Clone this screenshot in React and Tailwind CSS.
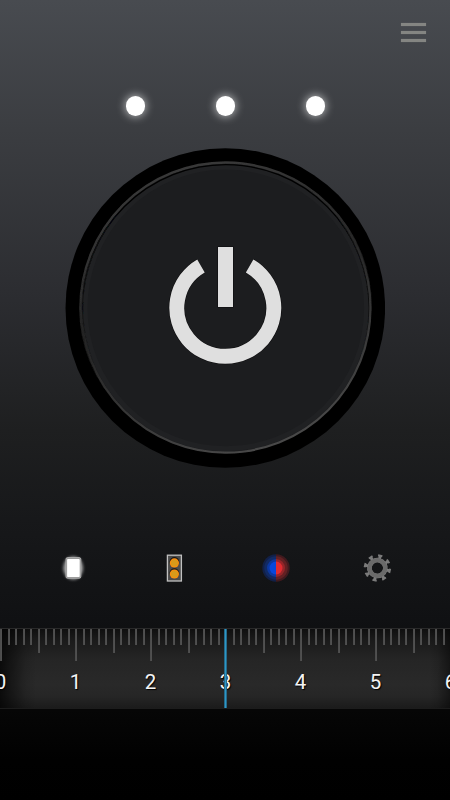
const GEAR_TEETH = [0, 45, 90, 135, 180, 225, 270, 315];
const TICKS = Array.from({ length: 61 }, (_, i) => i);
const LABELS = [0, 1, 2, 3, 4, 5, 6];

function MenuButton() {
  return (
    <button aria-label="Menu" className="flex h-[19px] w-[25px] flex-col justify-between">
      {[0, 1, 2].map((line) => (
        <span key={line} className="block h-[3px] w-full bg-[#848582] shadow-[0_0_1px_#77787a]" />
      ))}
    </button>
  );
}

function Lights() {
  return (
    <div className="flex h-5 w-[199px] items-center justify-between">
      {[0, 1, 2].map((light) => (
        <span
          key={light}
          className="h-5 w-[19px] rounded-full bg-white shadow-[0_0_9px_1px_rgba(255,255,255,0.6)]"
        />
      ))}
    </div>
  );
}

function PowerDial() {
  return (
    <button aria-label="Power" className="block h-80 w-80">
      <svg viewBox="0 0 320 320" className="h-full w-full">
        <defs>
          <linearGradient id="rimTop" x1="0" y1="0" x2="0.3" y2="1">
            <stop offset="0" stopColor="#3c3c3c" />
            <stop offset="0.45" stopColor="#2c2c2c" />
            <stop offset="0.8" stopColor="#191919" stopOpacity="0" />
          </linearGradient>
          <linearGradient id="rimShade" x1="0" y1="0" x2="0" y2="1">
            <stop offset="0" stopColor="#000" />
            <stop offset="0.5" stopColor="#101112" />
            <stop offset="0.7" stopColor="#1c1d1f" stopOpacity="0" />
          </linearGradient>
          <linearGradient id="rimBottom" x1="0.2" y1="0" x2="0.6" y2="1">
            <stop offset="0.25" stopColor="#222" stopOpacity="0" />
            <stop offset="0.6" stopColor="#2e2e2e" />
            <stop offset="1" stopColor="#484848" />
          </linearGradient>
          <filter id="soft" x="-5%" y="-5%" width="110%" height="110%">
            <feGaussianBlur stdDeviation="0.75" />
          </filter>
        </defs>
        <circle cx="160.3" cy="160" r="159.8" fill="#000" />
        <circle cx="160.8" cy="159.9" r="144.6" fill="#1c1d1f" />
        <circle cx="160.8" cy="159.9" r="140.8" fill="none" stroke="#202123" strokeWidth="5" />
        <circle cx="160.8" cy="159.9" r="145.4" fill="none" stroke="url(#rimTop)" strokeWidth="2.4" filter="url(#soft)" />
        <circle cx="160.8" cy="159.9" r="143.3" fill="none" stroke="url(#rimShade)" strokeWidth="1.3" filter="url(#soft)" />
        <circle cx="160.8" cy="159.9" r="144.7" fill="none" stroke="url(#rimBottom)" strokeWidth="2.2" filter="url(#soft)" />
        <g fill="none" stroke="#0b0b0c" strokeWidth="16">
          <path d="M136 117.9A48.5 48.5 0 1 0 184.6 117.9" />
          <path d="M160.5 98.6V159.5" />
        </g>
        <g fill="none" stroke="#dfdfdf" strokeWidth="15">
          <path d="M136 117.9A48.5 48.5 0 1 0 184.6 117.9" />
          <path d="M160.5 99V159" />
        </g>
      </svg>
    </button>
  );
}

function ScreenIcon() {
  return (
    <svg viewBox="0 0 30 30" className="h-[30px] w-[30px]">
      <defs>
        <filter id="glow" x="-50%" y="-50%" width="200%" height="200%">
          <feGaussianBlur stdDeviation="1.8" />
        </filter>
        <filter id="edge" x="-20%" y="-20%" width="140%" height="140%">
          <feGaussianBlur stdDeviation="0.5" />
        </filter>
      </defs>
      <ellipse cx="15.2" cy="15" rx="10" ry="11.6" fill="#fff" opacity="0.6" filter="url(#glow)" />
      <rect x="8" y="4.6" width="14.8" height="20.6" rx="1.5" fill="#969696" stroke="#b0b0b0" strokeWidth="0.9" />
      <rect x="9.2" y="6" width="12.4" height="18" rx="1" fill="#fff" filter="url(#edge)" />
      <rect x="9.5" y="6.2" width="11.8" height="17.7" rx="0.5" fill="#fff" />
    </svg>
  );
}

function WarningLightsIcon() {
  return (
    <svg viewBox="0 0 30 30" className="h-[30px] w-[30px]">
      <rect x="8.4" y="2.2" width="14" height="25.8" fill="#4b4b4b" stroke="#c0c0c0" strokeWidth="1.3" />
      <circle cx="15.4" cy="9" r="4.9" fill="#171717" />
      <circle cx="15.4" cy="20.1" r="4.9" fill="#171717" />
      <circle cx="15.4" cy="9.9" r="4.6" fill="#ff8c0c" />
      <circle cx="15.4" cy="21" r="4.6" fill="#ff8c0c" />
      <circle cx="15.4" cy="9.9" r="3.5" fill="#d89a1a" />
      <circle cx="15.4" cy="21" r="3.5" fill="#d89a1a" />
    </svg>
  );
}

function PoliceIcon() {
  const rings = [
    { r: 13.7, blue: "#122047", red: "#401a1e" },
    { r: 11.7, blue: "#112a64", red: "#632023" },
    { r: 9, blue: "#0c38a0", red: "#962529" },
    { r: 6.5, blue: "#0747dc", red: "#df2b31" },
  ];
  return (
    <svg viewBox="0 0 30 30" className="h-[30px] w-[30px]">
      {rings.map(({ r, blue, red }) => (
        <g key={r}>
          <path d={`M15 ${15 - r}A${r} ${r} 0 0 0 15 ${15 + r}Z`} fill={blue} />
          <path d={`M15 ${15 - r}A${r} ${r} 0 0 1 15 ${15 + r}Z`} fill={red} />
        </g>
      ))}
    </svg>
  );
}

function GearIcon() {
  return (
    <svg viewBox="0 0 30 30" className="h-[30px] w-[30px]">
      <g transform="rotate(13 15.4 15)">
        <g fill="#7a7a7a">
          {GEAR_TEETH.map((angle) => (
            <path key={angle} d="M14.1 6L13.9 3.6L13.2 3V1.4H17.6V3L16.9 3.6L16.7 6Z" transform={`rotate(${angle} 15.4 15)`} />
          ))}
        </g>
        <circle cx="15.4" cy="15" r="8" fill="none" stroke="#868686" strokeWidth="4.6" />
        <circle cx="15.4" cy="15" r="7.8" fill="none" stroke="#6a6a6a" strokeWidth="4.2" />
      </g>
    </svg>
  );
}

function tickHeight(i) {
  if (i % 10 === 0) return "h-8";
  if (i % 5 === 0) return "h-6";
  return "h-4";
}

function Ruler() {
  return (
    <div className="relative h-[81px] w-full overflow-hidden border-b border-t border-b-[#1c1c1c] border-t-[#2a2a2a] bg-[linear-gradient(to_bottom,#0f0f0f_0%,#191919_12%,#252525_38%,#292929_70%,#262626_85%,#1b1b1b_100%)]">
      <div className="absolute inset-y-0 left-0 w-9 bg-[linear-gradient(to_right,rgba(0,0,0,0.72),rgba(0,0,0,0.45)_30%,rgba(0,0,0,0.12)_70%,transparent)]" />
      <div className="absolute inset-y-0 right-0 w-5 bg-[linear-gradient(to_left,rgba(0,0,0,0.45),rgba(0,0,0,0.1)_60%,transparent)]" />
      <div className="relative flex h-8 w-[458px]">
        {TICKS.map((i) => (
          <div key={i} className="w-[7.5px] shrink-0">
            <div className={`w-0.5 border-r border-[#505050] bg-[#4c4c4c] ${tickHeight(i)}`} />
          </div>
        ))}
      </div>
      <div className="relative -ml-[37px] mt-[9px] flex h-6 w-[525px]">
        {LABELS.map((label) => (
          <span
            key={label}
            className="w-[75px] shrink-0 text-center font-[Roboto,'Liberation_Sans',sans-serif] text-[20.5px] leading-6 text-[#f4f4f4] [text-shadow:1px_1px_1px_#000]"
          >
            {label}
          </span>
        ))}
      </div>
      <div className="absolute -inset-y-px left-[224px] w-[3px] border-x border-[#27698a] bg-[#2b98c6]" />
    </div>
  );
}

export default function App() {
  return (
    <div className="flex h-[800px] w-[450px] flex-col overflow-hidden bg-[linear-gradient(to_bottom,#484b50_0px,#3b3d41_130px,#2b2c30_300px,#1e1f20_430px,#17181a_520px,#101113_620px,#0b0c0d_660px,#060606_710px,#010101_760px,#000_100%)]">
      <header className="flex h-24 justify-end pr-6 pt-[23px]">
        <MenuButton />
      </header>
      <main className="flex h-[532px] flex-col items-center">
        <Lights />
        <div className="mt-8">
          <PowerDial />
        </div>
        <nav className="mt-[85px] flex w-[334px] items-center justify-between">
          <ScreenIcon />
          <WarningLightsIcon />
          <PoliceIcon />
          <GearIcon />
        </nav>
      </main>
      <Ruler />
    </div>
  );
}
